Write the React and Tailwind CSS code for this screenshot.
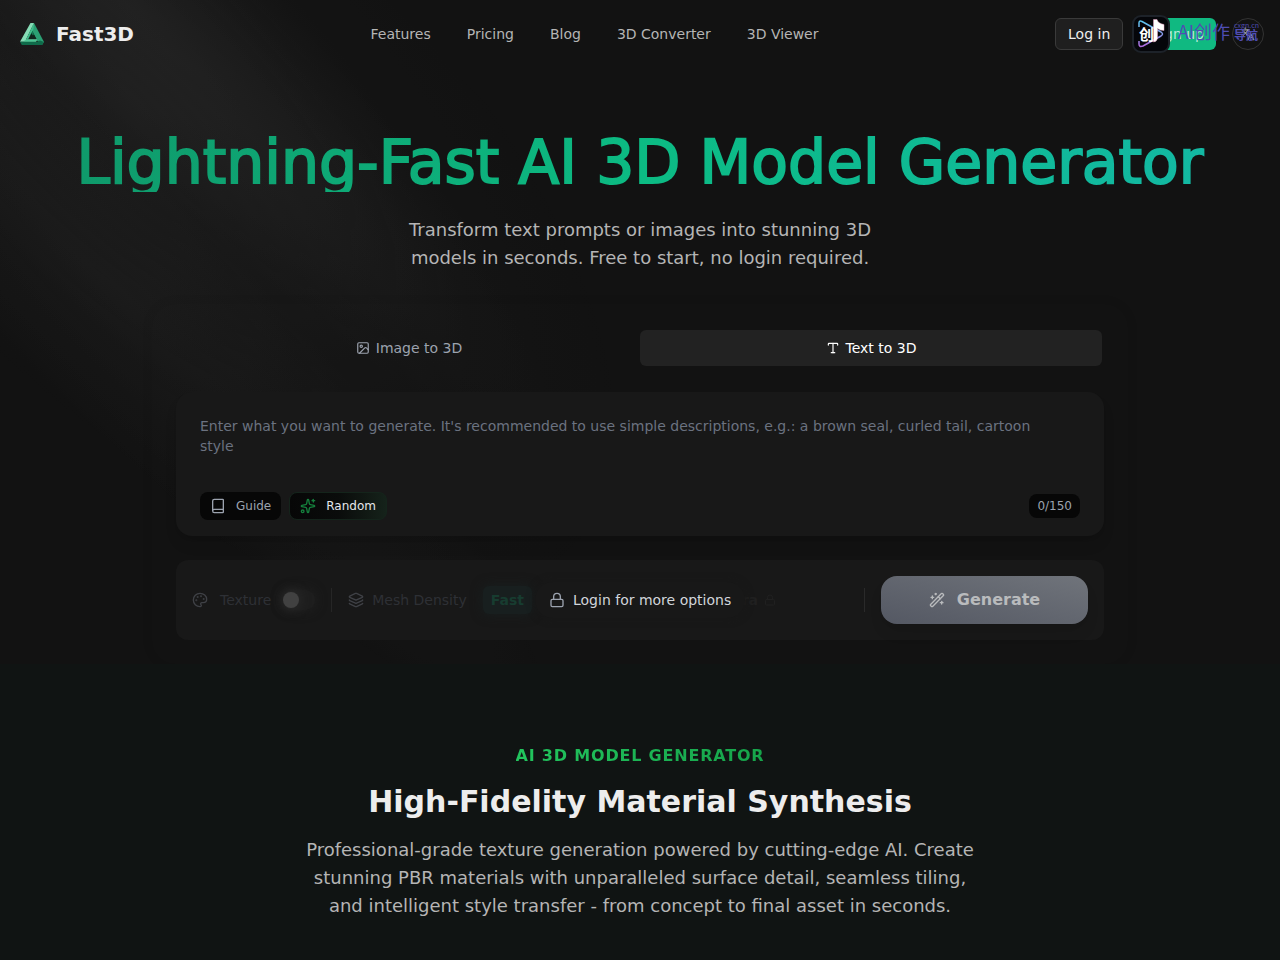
import { useState } from 'react';
import { Book, Image, Languages, Layers, Lock, Palette, Sparkles, Type, WandSparkles } from 'lucide-react';

const navLinks = ['Features', 'Pricing', 'Blog', '3D Converter', '3D Viewer'];

const MAX_PROMPT = 150;

const Logo = () => (
  <svg viewBox="0 0 24 22" className="h-[22px] w-6" aria-hidden="true">
    <path d="M12 4l2-4 10 19-2 3-5-4.500L12 8z" fill="#2b9f73" />
    <path d="M12 7.500l4.500 8.500H7.500z" fill="#10241c" />
    <path d="M12 7.500l2 3.500-1 1.500-1.500-2z" fill="#147a55" />
    <path d="M10.500 0H14l-8 16.500h11l-1 2.200H0z" fill="#86dcb6" />
    <path d="M14 0l-8 16.500h2L13.500 6z" fill="#3fbd8b" />
    <path d="M6 16.500h11l-1 2.200H3z" fill="#4cc795" />
    <path d="M0 18.700h17l3-1.200 4 1.500-2 3H1.800z" fill="#0f6b4a" />
  </svg>
);

const Spotlight = () => (
  <div className="pointer-events-none absolute inset-0 overflow-hidden opacity-70" aria-hidden="true">
    <div className="absolute top-0 left-0 h-[1280px] w-[560px] -translate-y-[350px] -rotate-45 rounded-full bg-[radial-gradient(68.54%_68.72%_at_55.02%_31.46%,hsla(0,0%,85%,.08)_0,hsla(0,0%,55%,.02)_50%,hsla(0,0%,45%,0)_80%)]" />
    <div className="absolute top-0 left-0 h-[1280px] w-56 -rotate-45 rounded-full bg-[radial-gradient(50%_50%_at_50%_50%,hsla(0,0%,85%,.06)_0,hsla(0,0%,45%,.02)_80%,transparent_100%)] [translate:5%_-50%]" />
    <div className="absolute top-0 left-0 h-[1280px] w-56 -translate-y-[350px] -rotate-45 bg-[radial-gradient(50%_50%_at_50%_50%,hsla(0,0%,85%,.04)_0,hsla(0,0%,45%,.02)_80%,transparent_100%)]" />
  </div>
);

const NavBadge = () => (
  <div className="pointer-events-none absolute top-[15px] right-[21px] flex items-start gap-2">
    <svg viewBox="0 0 38 38" className="size-[38px]" aria-hidden="true">
      <defs>
        <linearGradient id="play" x1="0" y1="0" x2="0" y2="1">
          <stop offset="0" stopColor="#5cc8f0" />
          <stop offset="1" stopColor="#b06be0" />
        </linearGradient>
      </defs>
      <rect x="1" y="1" width="36" height="36" rx="8" fill="#05060a" stroke="#1d2229" strokeWidth="2" />
      <path d="M7 12V8q0-3 3-1.500L29 17q3 2 0 4L11 31q-4 1.500-4-2v-3" fill="none" stroke="url(#play)" strokeWidth="1.500" />
      <path
        d="M21.500 4.500H25q1 4 7 5v6q-4 0-6.500-2v10q-1 3.500-4 3.500z"
        fill="#fff"
        stroke="#e8a0c0"
        strokeWidth="0.500"
      />
      <text x="7" y="25" fontSize="15" fontWeight="700" fill="#fff" fontFamily="Noto Sans CJK SC, sans-serif">
        创
      </text>
    </svg>
    <div className="flex h-8 items-center gap-1 font-['Noto_Sans_CJK_SC',sans-serif] text-[#4f4db3]">
      <span className="text-lg leading-8">AI创作</span>
      <span className="flex flex-col">
        <span className="text-[7px] leading-2">cxgn.cn</span>
        <span className="text-[12px] leading-3 font-bold">导航</span>
      </span>
    </div>
  </div>
);

const Header = () => (
  <header className="relative flex h-[68px] items-center justify-between px-4">
    <a href="#" className="flex items-center gap-3 pl-1">
      <Logo />
      <span className="text-xl font-bold text-[#ededed]">Fast3D</span>
    </a>
    <nav className="flex items-center gap-9">
      {navLinks.map((link) => (
        <a key={link} href="#" className="text-sm text-[#b5b5b5]">
          {link}
        </a>
      ))}
    </nav>
    <div className="flex items-center gap-4">
      <button className="h-8 rounded-md border border-[#3a3a3a] bg-[#1f1f1f] px-3 text-sm text-[#ededed]">Log in</button>
      <button className="h-8 rounded-md bg-[#10b981] px-3 text-sm text-[#b8ead8]">Sign up</button>
      <button className="flex size-8 items-center justify-center rounded-full border border-[#333333]" aria-label="Language">
        <Languages className="size-3.5 text-[#a0a0a0]" />
      </button>
    </div>
    <NavBadge />
  </header>
);

const ModeTabs = ({ mode, onChange }) => (
  <div role="tablist" className="grid h-10 grid-cols-2 rounded-lg p-0.5">
    <button
      role="tab"
      aria-selected={mode === 'image'}
      onClick={() => onChange('image')}
      className={`flex items-center justify-center gap-1.5 rounded-md text-sm ${
        mode === 'image' ? 'bg-[#222222] text-white' : 'text-[#9ca3af]'
      }`}
    >
      <Image className="size-3.5" />
      Image to 3D
    </button>
    <button
      role="tab"
      aria-selected={mode === 'text'}
      onClick={() => onChange('text')}
      className={`flex items-center justify-center gap-1.5 rounded-md text-sm ${
        mode === 'text' ? 'bg-[#222222] text-white' : 'text-[#9ca3af]'
      }`}
    >
      <Type className="size-3.5" />
      Text to 3D
    </button>
  </div>
);

const PromptBox = ({ prompt, onChange }) => (
  <div className="mt-6 rounded-2xl bg-[#181818] px-6 pt-6 pb-4 shadow-lg shadow-black/10">
    <textarea
      aria-label="Prompt"
      value={prompt}
      maxLength={MAX_PROMPT}
      onChange={(e) => onChange(e.target.value)}
      placeholder="Enter what you want to generate. It's recommended to use simple descriptions, e.g.: a brown seal, curled tail, cartoon style"
      className="block h-[76px] w-full resize-none bg-transparent pr-4 text-sm text-[#ededed] outline-none placeholder:text-[#6b7280]"
    />
    <div className="flex items-center justify-between">
      <div className="flex gap-2">
        <button className="flex h-7 items-center gap-2.5 rounded-lg bg-[#070707] px-2.5 text-xs text-[#9ca3af]">
          <Book className="size-4" />
          Guide
        </button>
        <button className="flex h-7 items-center gap-2.5 rounded-lg border border-[#14241b] bg-linear-to-r from-[#070707] via-[#0a0c0b] to-[#15221a] px-2.5 text-xs text-[#e5e7eb]">
          <Sparkles className="size-4 text-[#15803d]" />
          Random
        </button>
      </div>
      <span className="rounded-lg bg-[#070707] px-2 py-1 text-xs text-[#9ca3af]">
        {prompt.length}/{MAX_PROMPT}
      </span>
    </div>
  </div>
);

const OptionsBar = () => (
  <div className="mt-6 flex h-20 items-center rounded-xl bg-[#181818] px-4">
    <div className="relative flex flex-1 items-center text-sm text-[#2e3035]">
      <Palette className="size-4 text-[#3f4146]" />
      <label htmlFor="texture" className="ml-3">
        Texture
      </label>
      <span className="ml-3 flex h-5 w-8 items-center rounded-full bg-[#1e1e1e] shadow-[0_0_12px_#222222]">
        <input
          id="texture"
          type="checkbox"
          disabled
          className="size-4 appearance-none rounded-full bg-[#414141] shadow-[0_0_12px_#303030]"
        />
      </span>
      <span className="mx-4 h-6 w-px bg-[#262626]" />
      <Layers className="size-4 text-[#3f4146]" />
      <span className="ml-2">Mesh Density</span>
      <span className="ml-4 rounded-md bg-[#181f1f] px-2 py-1 font-bold text-[#173c30] shadow-[0_0_12px_#181f1f]">Fast</span>
      <span className="mr-[88px] ml-auto flex items-center gap-1.5 font-bold text-[#202020]">
        Ultra
        <Lock className="size-3" />
      </span>

      {/* Locked state, sits over the options */}
      <a
        href="#"
        className="absolute left-[343px] flex h-9 items-center gap-2 rounded-full bg-[#181818] px-3.5 text-[#d1d5db] shadow-[0_0_8px_#181818]"
      >
        <Lock className="size-4 text-[#9ca3af]" />
        Login for more options
      </a>
    </div>
    <span className="mr-4 h-6 w-px bg-[#2a2a2a]" />
    <button
      disabled
      className="flex h-12 w-[207px] items-center justify-center gap-3 rounded-2xl bg-linear-to-tr from-[#545863] to-[#70747b] font-bold text-[#b9bbbd] shadow-lg shadow-black/10"
    >
      <WandSparkles className="size-4" />
      Generate
    </button>
  </div>
);

export default function App() {
  const [mode, setMode] = useState('text');
  const [prompt, setPrompt] = useState('');

  return (
    <div className="relative min-h-screen overflow-hidden bg-[#121212] font-['DejaVu_Sans',sans-serif]">
      <Spotlight />
      <div className="relative">
        <Header />

        <main>
          <section className="px-4 pt-16 text-center">
            <h1 className="bg-linear-to-r from-[#0f9668] via-[#0cbb83] to-[#14b8a6] bg-clip-text text-6xl leading-[60px] font-medium text-transparent [-webkit-text-stroke:2px_transparent]">
              Lightning-Fast AI 3D Model Generator
            </h1>
            <p className="mx-auto mt-6 max-w-lg text-lg leading-7 text-[#b5b5b5]">
              Transform text prompts or images into stunning 3D models in seconds. Free to start, no login required.
            </p>
          </section>

          <section className="mx-auto mt-8 max-w-[976px] rounded-3xl p-6 shadow-[0_0_12px_rgba(0,0,0,0.08)]">
            <ModeTabs mode={mode} onChange={setMode} />
            <PromptBox prompt={prompt} onChange={setPrompt} />
            <OptionsBar />
          </section>

          <section className="bg-[#101413] px-4 pt-20 pb-10 text-center">
            <p className="mx-auto w-fit bg-linear-to-r from-[#22c55e] to-[#16a34a] bg-clip-text font-bold tracking-wider text-transparent uppercase">
              AI 3D Model Generator
            </p>
            <h2 className="mt-4 text-3xl leading-9 font-bold text-[#ededed]">High-Fidelity Material Synthesis</h2>
            <p className="mx-auto mt-4 max-w-[672px] text-lg leading-7 text-[#b5b5b5]">
              Professional-grade texture generation powered by cutting-edge AI. Create stunning PBR materials with
              unparalleled surface detail, seamless tiling, and intelligent style transfer - from concept to final asset
              in seconds.
            </p>
          </section>
        </main>
      </div>
    </div>
  );
}
